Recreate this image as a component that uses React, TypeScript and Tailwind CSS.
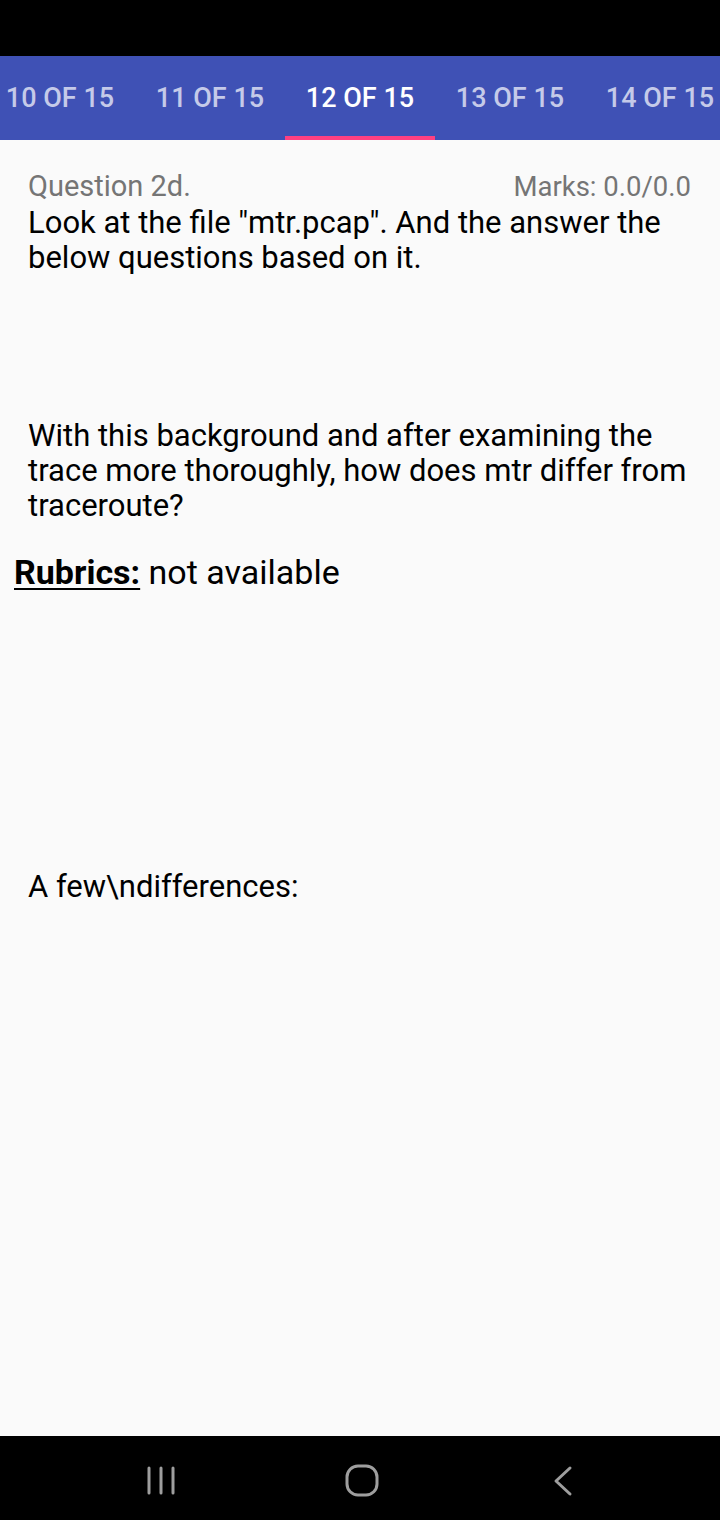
import React from "react";

export default function App() {
  const tabs = ["10 OF 15", "11 OF 15", "12 OF 15", "13 OF 15", "14 OF 15"];
  return (
    <div className="w-[720px] h-[1520px] flex flex-col bg-[#fafafa] overflow-hidden" style={{ fontFamily: "Roboto, 'Liberation Sans', sans-serif" }}>
      <div className="h-[56px] bg-black shrink-0" />
      <div className="h-[84px] bg-[#3f51b5] shrink-0 flex ml-[-15px]">
        {tabs.map((t, i) => (
          <div
            key={t}
            className={`w-[150px] shrink-0 flex items-center justify-center pt-[4px] border-b-[4px] text-[27px] font-medium ${i === 2 ? "text-white border-[#ff4081]" : "text-[#c5cae9] border-transparent"}`}
          >
            {t}
          </div>
        ))}
      </div>
      <div className="flex-1 flex flex-col">
        <div className="pl-[28px] pr-[29px] pt-[28px] flex justify-between items-baseline leading-[36px] text-[#757575]">
          <span className="text-[29px]">Question 2d.</span>
          <span className="text-[27.5px]">Marks: 0.0/0.0</span>
        </div>
        <div className="pl-[28px] pr-[28px] text-[31px] leading-[35px] text-black">
          Look at the file "mtr.pcap". And the answer the below questions based on it.
        </div>
        <div className="pl-[28px] pr-[28px] pt-[143px] text-[31px] leading-[35px] text-black">
          With this background and after examining the trace more thoroughly, how does mtr differ from traceroute?
        </div>
        <div className="pl-[14px] pt-[28px] text-[34px] leading-[42px] text-black">
          <span className="font-bold underline underline-offset-[4px] decoration-[2px]">Rubrics:</span> not available
        </div>
        <div className="pl-[28px] pt-[276px] text-[31px] leading-[35px] text-black">
          A few\ndifferences:
        </div>
      </div>
      <div className="h-[84px] bg-black shrink-0 flex items-center pl-[60px] pt-[6px]">
        <div className="w-[201px] flex justify-center">
          <svg width="30" height="30" viewBox="0 0 30 30">
            <g stroke="#9e9e9e" strokeWidth="3" strokeLinecap="round">
              <line x1="3" y1="2" x2="3" y2="27" />
              <line x1="15" y1="2" x2="15" y2="27" />
              <line x1="27" y1="2" x2="27" y2="27" />
            </g>
          </svg>
        </div>
        <div className="w-[201px] flex justify-center">
          <svg width="34" height="34" viewBox="0 0 34 34">
            <rect x="2" y="2" width="30" height="29" rx="11" fill="none" stroke="#9e9e9e" strokeWidth="3" />
          </svg>
        </div>
        <div className="w-[201px] flex justify-center">
          <svg width="22" height="32" viewBox="0 0 22 32">
            <polyline points="18,3 4,16 18,29" fill="none" stroke="#9e9e9e" strokeWidth="3" strokeLinecap="round" strokeLinejoin="round" />
          </svg>
        </div>
      </div>
    </div>
  );
}
